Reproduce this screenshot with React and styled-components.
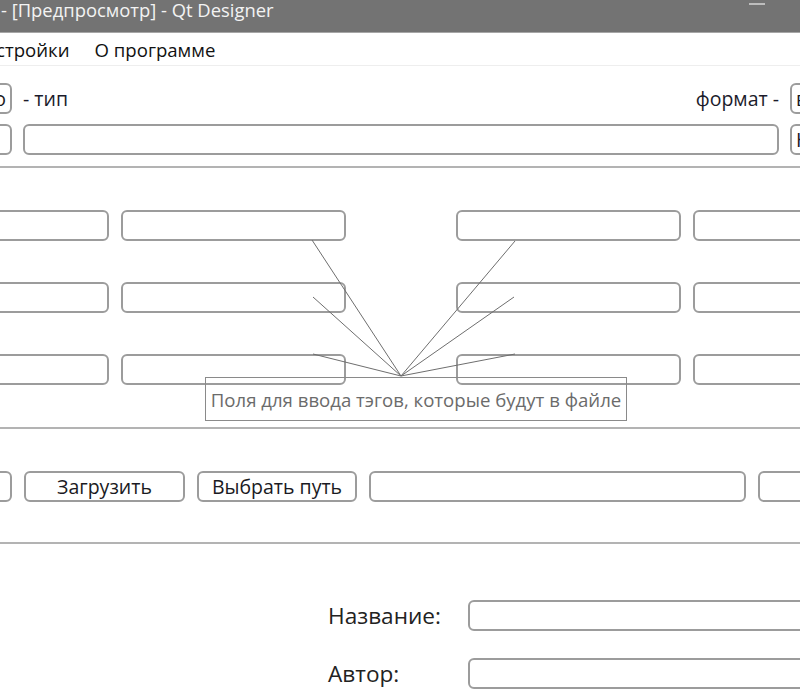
import React from "react";
import styled, { createGlobalStyle } from "styled-components";

const Global = createGlobalStyle`
  html, body { margin:0; padding:0; background:#fff; }
  body { font-family:"Open Sans","Noto Sans","DejaVu Sans",sans-serif; }
  #root { width:800px; height:700px; overflow:hidden; }
`;

/* ===== окно ===== */
const Window = styled.div` width:800px; height:700px; overflow:hidden; background:#fff; `;
const TitleBar = styled.div`
  height:32px; background:#737373; border-bottom:1px solid #a6a6a6;
  display:flex; align-items:center; padding:0 35px 0 1px;
`;
const TitleText = styled.div` flex:1; color:#f3f3f3; font-size:18.4px; line-height:32px; white-space:nowrap; margin-top:-13px; `;
const MinBtn = styled.div` width:16px; height:2px; background:#bdbdbd; margin-top:-24px; `;

const MenuBar = styled.div`
  height:32px; border-bottom:1px solid #eeeeee; display:flex; align-items:center; gap:25px;
`;
const MenuItem = styled.div`
  font-size:18.6px; color:#111; white-space:nowrap;
  margin-left:${p => p.$shift || 0}px;
`;

/* ===== общие элементы ===== */
const Divider = styled.div` height:2px; background:#b3b3b3; `;
const Row = styled.div` height:31px; display:flex; align-items:center; gap:${p => p.$gap || 11}px; `;
const Field = styled.div`
  box-sizing:border-box; height:31px; border:2px solid #9c9c9c; border-radius:6px; background:#fff;
  flex:${p => (p.$grow ? "1 1 auto" : "0 0 auto")};
  width:${p => (p.$w ? p.$w + "px" : "auto")};
  margin-left:${p => p.$ml || 0}px; margin-right:${p => p.$mr || 0}px;
  display:flex; align-items:center; justify-content:${p => (p.$end ? "flex-end" : "flex-start")};
  padding:0 4px; font-size:19.5px; color:#1a1a22; overflow:hidden; white-space:nowrap;
`;
const Button = styled(Field)` justify-content:center; padding:0; `;
const Label = styled.div` font-size:19.5px; color:#1b1b2b; white-space:nowrap; `;
const Spacer = styled.div` flex:1; `;

/* ===== секции ===== */
const TopSection = styled.div` padding:17px 0 11px; display:flex; flex-direction:column; gap:10px; `;
const TagsSection = styled.div` position:relative; padding:42px 0; display:flex; gap:110px; margin-left:-116px; `;
const TagGroup = styled.div` display:grid; grid-template-columns:225px 225px; column-gap:12px; row-gap:41px; `;
const ButtonsSection = styled.div` padding:42px 0 40px; `;
const MetaSection = styled.div`
  padding:56px 0 0 328px; display:grid; grid-template-columns:140px 1fr; row-gap:27px; align-items:center;
`;
const MetaLabel = styled.div` font-size:22.6px; color:#222; `;

/* ===== подсказка со стрелками ===== */
const Hint = styled.div`
  position:absolute; left:321px; top:209px; width:422px; height:44px; box-sizing:border-box;
  border:1px solid #8a8a8a; display:flex; align-items:center; justify-content:center;
  font-size:18.6px; color:#6b6b6b; white-space:nowrap;
`;
const HintLines = styled.svg` position:absolute; left:116px; top:0; pointer-events:none; `;

const apex = [401, 208];
const ends = [[312, 72], [313, 129], [313, 186], [515, 73], [514, 129], [515, 186]];

export default function App(){
  return (
    <Window>
      <Global />
      <TitleBar>
        <TitleText>- [Предпросмотр] - Qt Designer</TitleText>
        <MinBtn />
      </TitleBar>
      <MenuBar>
        <MenuItem $shift={-28}>Настройки</MenuItem>
        <MenuItem>О программе</MenuItem>
      </MenuBar>

      <TopSection>
        <Row>
          <Field $w={60} $ml={-48} $end>Аудио</Field>
          <Label>- тип</Label>
          <Spacer />
          <Label>формат -</Label>
          <Field $w={60} $mr={-50}>вав</Field>
        </Row>
        <Row>
          <Field $w={60} $ml={-48} />
          <Field $grow />
          <Field $w={60} $mr={-50}>Н</Field>
        </Row>
      </TopSection>
      <Divider />

      <TagsSection>
        {[0, 1].map(g => (
          <TagGroup key={g}>
            {Array.from({ length: 6 }).map((_, i) => <Field key={i} />)}
          </TagGroup>
        ))}
        <HintLines width="800" height="260">
          {ends.map(([x, y], i) => (
            <line key={i} x1={apex[0]} y1={apex[1]} x2={x} y2={y} stroke="#6e6e6e" strokeWidth="1" />
          ))}
        </HintLines>
        <Hint>Поля для ввода тэгов, которые будут в файле</Hint>
      </TagsSection>
      <Divider />

      <ButtonsSection>
        <Row $gap={12}>
          <Button $w={60} $ml={-48} />
          <Button $w={161}>Загрузить</Button>
          <Button $w={160}>Выбрать путь</Button>
          <Field $grow />
          <Button $w={80} $mr={-38} />
        </Row>
      </ButtonsSection>
      <Divider />

      <MetaSection>
        <MetaLabel>Название:</MetaLabel>
        <Field $w={400} />
        <MetaLabel>Автор:</MetaLabel>
        <Field $w={400} />
      </MetaSection>
    </Window>
  );
}
